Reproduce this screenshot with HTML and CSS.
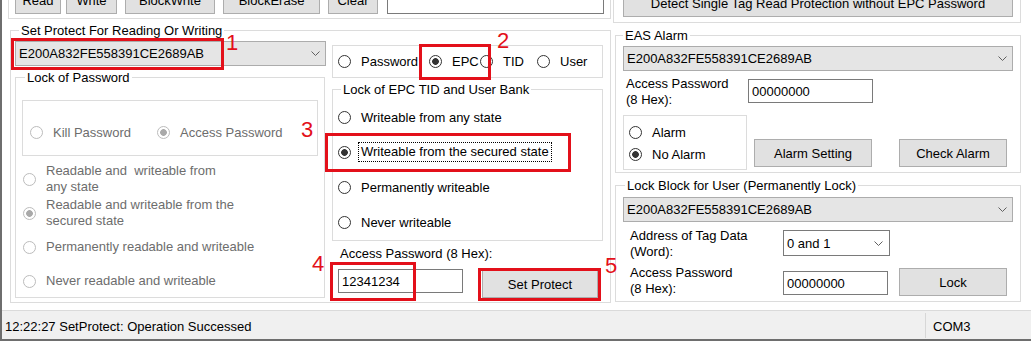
FILE: index.html
```html
<!DOCTYPE html>
<html lang="en">
<head>
  <meta charset="UTF-8">
  <title>Set Protect</title>
  <link rel="stylesheet" href="styles.css">
</head>
<body>
  <div class="window">
    <div class="main">
      <div class="left">
        <div class="toolbar">
          <button class="btn tb-read">Read</button>
          <button class="btn tb-write">Write</button>
          <button class="btn tb-bwrite">BlockWrite</button>
          <button class="btn tb-berase">BlockErase</button>
          <button class="btn tb-clear">Clear</button>
          <input class="textbox tb-input" type="text">
        </div>

        <fieldset class="group protect">
          <legend>Set Protect For Reading Or Writing</legend>
          <div class="protect-body">
            <div class="col-a">
              <div class="combo">
                <span>E200A832FE558391CE2689AB</span>
                <svg class="chev" width="9" height="5" viewBox="0 0 9 5"><polyline points="0.5,0.5 4.5,4.5 8.5,0.5" fill="none" stroke="#606060"/></svg>
              </div>

              <fieldset class="group pwd-lock">
                <legend>Lock of Password</legend>
                <div class="panel pwd-kind">
                  <label class="radio off kill"><input type="radio" name="kind" disabled>Kill Password</label>
                  <label class="radio off"><input type="radio" name="kind" disabled checked>Access Password</label>
                </div>
                <div class="pwd-modes">
                  <label class="radio off"><input type="radio" name="mode" disabled><span>Readable and&nbsp; writeable from<br>any state</span></label>
                  <label class="radio off"><input type="radio" name="mode" disabled checked><span>Readable and writeable from the<br>secured state</span></label>
                  <label class="radio off"><input type="radio" name="mode" disabled><span>Permanently readable and writeable</span></label>
                  <label class="radio off"><input type="radio" name="mode" disabled><span>Never readable and writeable</span></label>
                </div>
              </fieldset>
            </div>

            <div class="col-b">
              <div class="panel banks">
                <label class="radio"><input type="radio" name="bank">Password</label>
                <label class="radio"><input type="radio" name="bank" checked>EPC</label>
                <label class="radio"><input type="radio" name="bank">TID</label>
                <label class="radio"><input type="radio" name="bank">User</label>
              </div>

              <fieldset class="group bank-lock">
                <legend>Lock of EPC TID and User Bank</legend>
                <div class="locks">
                  <label class="radio"><input type="radio" name="lock"><span>Writeable from any state</span></label>
                  <label class="radio focused"><input type="radio" name="lock" checked><span class="focus">Writeable from the secured state</span></label>
                  <label class="radio"><input type="radio" name="lock"><span>Permanently writeable</span></label>
                  <label class="radio"><input type="radio" name="lock"><span>Never writeable</span></label>
                </div>
              </fieldset>

              <div class="caption">Access Password (8 Hex):</div>
              <div class="pwd-row">
                <input class="textbox pwd-input" type="text" value="12341234">
                <button class="btn set-btn">Set Protect</button>
              </div>
            </div>
          </div>
        </fieldset>
      </div>

      <div class="right">
        <div class="detect-box">
          <button class="btn detect-btn">Detect Single Tag Read Protection without EPC Password</button>
        </div>

        <fieldset class="group eas">
          <legend>EAS Alarm</legend>
          <div class="combo">
            <span>E200A832FE558391CE2689AB</span>
            <svg class="chev" width="9" height="5" viewBox="0 0 9 5"><polyline points="0.5,0.5 4.5,4.5 8.5,0.5" fill="none" stroke="#606060"/></svg>
          </div>
          <div class="field-row">
            <div class="field-label eas-label">Access Password<br>(8 Hex):</div>
            <input class="textbox eas-input" type="text" value="00000000">
          </div>
          <div class="alarm-row">
            <div class="panel alarm-panel">
              <label class="radio"><input type="radio" name="alarm">Alarm</label>
              <label class="radio"><input type="radio" name="alarm" checked>No Alarm</label>
            </div>
            <button class="btn alarm-set">Alarm Setting</button>
            <button class="btn alarm-check">Check Alarm</button>
          </div>
        </fieldset>

        <fieldset class="group lock-user">
          <legend>Lock Block for User (Permanently Lock)</legend>
          <div class="combo">
            <span>E200A832FE558391CE2689AB</span>
            <svg class="chev" width="9" height="5" viewBox="0 0 9 5"><polyline points="0.5,0.5 4.5,4.5 8.5,0.5" fill="none" stroke="#606060"/></svg>
          </div>
          <div class="field-row addr-row">
            <div class="field-label lock-label">Address of Tag Data<br>(Word):</div>
            <div class="combo combo-white">
              <span>0 and 1</span>
              <svg class="chev" width="9" height="5" viewBox="0 0 9 5"><polyline points="0.5,0.5 4.5,4.5 8.5,0.5" fill="none" stroke="#606060"/></svg>
            </div>
          </div>
          <div class="field-row lockpw-row">
            <div class="field-label lock-label">Access Password<br>(8 Hex):</div>
            <input class="textbox lock-input" type="text" value="00000000">
            <button class="btn lock-btn">Lock</button>
          </div>
        </fieldset>
      </div>
    </div>

    <div class="statusbar">
      <div class="status-msg">12:22:27 SetProtect: Operation Successed</div>
      <div class="status-port">COM3</div>
    </div>
  </div>

  <!-- annotation marks drawn over the form -->
  <div class="mark mark-1"></div>
  <div class="mark mark-2"></div>
  <div class="mark mark-3"></div>
  <div class="mark mark-4"></div>
  <div class="mark mark-5"></div>
  <span class="num num-1">1</span>
  <span class="num num-2">2</span>
  <span class="num num-3">3</span>
  <span class="num num-4">4</span>
  <span class="num num-5">5</span>
</body>
</html>
```

FILE: styles.css
```css
* {
  box-sizing: border-box;
}

html, body {
  margin: 0;
  padding: 0;
  background: #fff;
  font-family: "Liberation Sans", Arial, sans-serif;
  font-size: 13px;
  line-height: 15px;
  color: #000;
}

.window {
  width: 1031px;
  height: 341px;
  overflow: hidden;
  border-left: 2px solid #6e6e6e;
  border-bottom: 2px solid #6e6e6e;
  display: flex;
  flex-direction: column;
}

.main {
  display: flex;
  flex-shrink: 0;
  height: 330px;
  margin-top: -20px;
  padding-left: 6px;
}

/* common controls */
.btn {
  font: inherit;
  color: #000;
  background: #e1e1e1;
  border: 1px solid #adadad;
  border-radius: 0;
  height: 28px;
  padding: 0;
  flex-shrink: 0;
}

.textbox {
  font: inherit;
  color: #000;
  height: 24px;
  border: 1px solid #7a7a7a;
  background: #fff;
  padding: 0 0 0 3px;
  margin: 0;
  outline: none;
  flex-shrink: 0;
}

.combo {
  display: flex;
  align-items: center;
  justify-content: space-between;
  height: 25px;
  border: 1px solid #acacac;
  background: #e5e5e5;
  padding: 0 5px 0 3px;
}

.combo-white {
  background: #fff;
  border-color: #7a7a7a;
}

.chev {
  display: block;
}

.group {
  margin: 0;
  border: 1px solid #dcdcdc;
  min-width: 0;
}

.group legend {
  padding: 0 2px;
  line-height: 15px;
}

.panel {
  border: 1px solid #dcdcdc;
}

.radio {
  display: flex;
  align-items: center;
  gap: 10px;
  white-space: nowrap;
}

.radio input {
  -webkit-appearance: none;
  appearance: none;
  flex-shrink: 0;
  width: 13px;
  height: 13px;
  margin: 0;
  border: 1px solid #333;
  border-radius: 50%;
  background: #fff;
}

.radio input:checked {
  background: radial-gradient(circle, #333 3px, #fff 3.7px);
}

.radio.off {
  color: #6d6d6d;
}

.radio.off input {
  border-color: #bcbcbc;
}

.radio.off input:checked {
  background: radial-gradient(circle, #a9a9a9 3px, #fff 3.7px);
}

/* left side */
.left {
  width: 603px;
}

.toolbar {
  display: flex;
  align-items: flex-end;
  border: 1px solid #dcdcdc;
  padding: 5px 6px 4px 6px;
}

.tb-read { width: 46px; }
.tb-write { width: 51px; margin-left: 5px; }
.tb-bwrite { width: 90px; margin-left: 8px; }
.tb-berase { width: 97px; margin-left: 8px; }
.tb-clear { width: 50px; margin-left: 8px; }
.tb-input { flex: 1; margin-left: 9px; }

.protect {
  width: 601px;
  margin: 4px 0 0 2px;
  padding: 0 7px 4px 4px;
}

.protect > legend {
  margin-left: 4px;
}

.protect-body {
  display: flex;
  gap: 7px;
}

.col-a {
  width: 310px;
}

.col-a > .combo {
  margin-top: 3px;
  width: 311px;
}

.pwd-lock {
  margin-top: 4px;
  padding: 0 6px;
}

.pwd-lock legend {
  margin-left: 3px;
}

.pwd-kind {
  display: flex;
  margin-top: 15px;
  padding: 24px 6px 15px 7px;
}

.kill {
  width: 127px;
}

.pwd-modes {
  display: flex;
  flex-direction: column;
  gap: 2px;
  margin: 7px 0 0 1px;
}

.pwd-modes .radio {
  height: 32px;
  line-height: 16px;
}

.col-b {
  width: 271px;
}

.banks {
  display: grid;
  grid-template-columns: 91px 51px 57px auto;
  align-items: center;
  height: 33px;
  margin-top: 7px;
  padding-left: 5px;
}

.bank-lock {
  margin-top: 4px;
  padding: 8px 4px 6px 5px;
}

.bank-lock legend {
  margin-left: 3px;
}

.locks {
  display: flex;
  flex-direction: column;
  gap: 11px;
}

.locks .radio {
  height: 24px;
}

.radio.focused {
  gap: 7px;
}

.focus {
  border: 1px dotted #000;
  padding: 1px 2px 2px 2px;
}

.caption {
  margin: 5px 0 0 8px;
}

.pwd-row {
  display: flex;
  align-items: flex-start;
  margin-top: 8px;
}

.pwd-input {
  width: 125px;
  margin-left: 6px;
}

.set-btn {
  width: 116px;
  margin: 1px 0 0 19px;
}

/* right side */
.right {
  width: 408px;
  margin-left: 2px;
}

.detect-box {
  border: 1px solid #dcdcdc;
  padding: 8px 7px 5px 9px;
}

.detect-btn {
  width: 390px;
}

.eas,
.lock-user {
  width: 406px;
  margin: 5px 0 0 2px;
  padding: 0 7px 2px 7px;
}

.eas > .combo {
  margin-top: 3px;
}

.field-row {
  display: flex;
  align-items: flex-start;
  margin-top: 5px;
}

.field-label {
  line-height: 16px;
  flex-shrink: 0;
}

.eas-label {
  width: 122px;
  margin-left: 3px;
}

.eas-input {
  width: 125px;
  margin-top: 3px;
}

.alarm-row {
  display: flex;
  align-items: flex-start;
  margin-top: 7px;
}

.alarm-panel {
  width: 124px;
  padding: 5px 0 4px 5px;
}

.alarm-panel .radio {
  height: 22px;
}

.alarm-set {
  width: 118px;
  margin: 24px 0 0 7px;
}

.alarm-check {
  width: 108px;
  margin: 24px 0 0 27px;
}

.lock-user {
  padding-bottom: 4px;
}

.lock-user legend {
  margin-left: 2px;
}

.lock-user > .combo {
  margin-top: 4px;
}

.addr-row {
  margin-top: 6px;
}

.lock-label {
  width: 153px;
  margin-left: 7px;
}

.combo-white {
  width: 107px;
  height: 26px;
  margin-top: 2px;
  padding-right: 6px;
}

.lock-input {
  width: 105px;
  margin-top: 6px;
}

.lock-btn {
  width: 108px;
  margin: 3px 0 0 11px;
}

/* status bar */
.statusbar {
  display: flex;
  height: 29px;
  flex-shrink: 0;
  border-top: 1px solid #dadada;
  background: #f0f0f0;
}

.status-msg {
  flex: 1;
  padding: 8px 0 0 3px;
}

.status-port {
  width: 106px;
  margin: 2px 0 1px;
  padding: 6px 0 0 7px;
  border-left: 1px solid #d7d7d7;
}

/* red annotations */
.mark {
  position: absolute;
  border: 3px solid #e3101a;
}

.mark-1 { left: 11px; top: 38px; width: 213px; height: 32px; }
.mark-2 { left: 419px; top: 44px; width: 72px; height: 36px; }
.mark-3 { left: 325px; top: 133px; width: 246px; height: 39px; }
.mark-4 { left: 330px; top: 262px; width: 86px; height: 39px; }
.mark-5 { left: 478px; top: 268px; width: 123px; height: 33px; }

.num {
  position: absolute;
  font-size: 22px;
  line-height: 22px;
  color: #e3101a;
}

.num-1 { left: 226px; top: 32px; }
.num-2 { left: 497px; top: 30px; }
.num-3 { left: 301px; top: 119px; }
.num-4 { left: 312px; top: 253px; }
.num-5 { left: 605px; top: 255px; }
```
